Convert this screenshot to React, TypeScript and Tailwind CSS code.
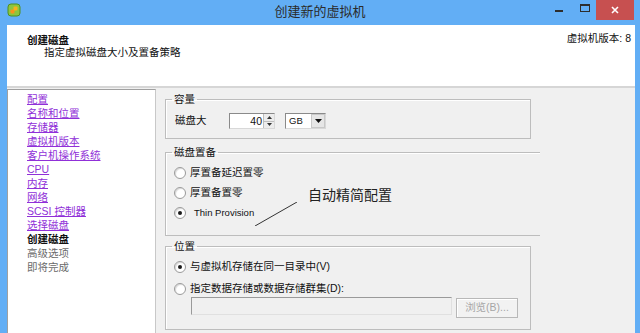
const font = { fontFamily: '"Liberation Sans", "Noto Sans CJK SC", sans-serif' };

const navItems: { label: string; kind: "link" | "current" | "todo" }[] = [
  { label: "配置", kind: "link" },
  { label: "名称和位置", kind: "link" },
  { label: "存储器", kind: "link" },
  { label: "虚拟机版本", kind: "link" },
  { label: "客户机操作系统", kind: "link" },
  { label: "CPU", kind: "link" },
  { label: "内存", kind: "link" },
  { label: "网络", kind: "link" },
  { label: "SCSI 控制器", kind: "link" },
  { label: "选择磁盘", kind: "link" },
  { label: "创建磁盘", kind: "current" },
  { label: "高级选项", kind: "todo" },
  { label: "即将完成", kind: "todo" },
];

const Radio = ({ checked = false }: { checked?: boolean }) => (
  <span className="ml-[2px] flex h-[12px] w-[12px] shrink-0 items-center justify-center rounded-full border border-[#9a9a9a] bg-white shadow-[inset_1px_1px_1px_#d8d8d8]">
    {checked && <span className="h-[4px] w-[4px] rounded-full bg-[#1a1a1a]" />}
  </span>
);

const Legend = ({ children }: { children: string }) => (
  <legend className="px-[2px] text-[10.5px] leading-[14px] text-[#111]">{children}</legend>
);

const TitleIcon = () => (
  <svg width="14" height="14" viewBox="0 0 14 14">
    <rect x="1" y="1" width="12" height="12" rx="3" fill="#8cc63f" stroke="#4f8f22" strokeWidth="1" />
    <rect x="3.5" y="6.5" width="4" height="4" rx="1" fill="#f7941d" />
    <rect x="6.5" y="3.5" width="4" height="4" rx="1" fill="#f7b21d" />
  </svg>
);

export default function App() {
  return (
    <div className="flex h-[333px] w-[640px] flex-col overflow-hidden bg-[#62aef5] text-[#111]" style={font}>
      {/* title bar */}
      <div className="grid h-[25px] shrink-0 grid-cols-[1fr_auto_1fr]">
        <div className="pl-[7px] pt-[3px]">
          <TitleIcon />
        </div>
        <div className="pt-[3px] text-[13px] leading-[18px] text-[#2b2b2b]">创建新的虚拟机</div>
        <div className="flex items-start justify-end pr-[6px]">
          <div className="mt-[10px] h-[2px] w-[8px] bg-[#2d2d2d]" />
          <div className="ml-[17px] mt-[4px] h-[8px] w-[10px] border border-t-2 border-[#2d2d2d]" />
          <div className="ml-[6px] flex h-[20px] w-[38px] items-center justify-center bg-[#c75050]">
            <svg width="8" height="8" viewBox="0 0 8 8">
              <path d="M1 1L7 7M7 1L1 7" stroke="#fff" strokeWidth="1.6" />
            </svg>
          </div>
        </div>
      </div>

      <div className="flex flex-1 flex-col pl-[7px] pr-[5px]">
        {/* header */}
        <div className="flex h-[63px] shrink-0 items-start justify-between border-b-2 border-[#d6d6d6] bg-white">
          <div className="pl-[20px] pt-[9px] text-[10.5px] leading-[12px]">
            <div className="font-bold">创建磁盘</div>
            <div className="pl-[17px]">指定虚拟磁盘大小及置备策略</div>
          </div>
          <div className="pr-[4px] pt-[7px] text-[10.5px] leading-[12px]">虚拟机版本: 8</div>
        </div>

        {/* body */}
        <div className="flex flex-1 bg-[#f0f0f0] pt-px">
          <nav className="w-[149px] shrink-0 border border-b-0 border-[#a0a0a0] border-r-[#c8c8c8] bg-white pl-[19px] pt-[2px] text-[10.5px] leading-[14px]">
            {navItems.map((item) => (
              <div
                key={item.label}
                className={
                  item.kind === "link"
                    ? "text-[#9030d8] underline underline-offset-1"
                    : item.kind === "current"
                      ? "font-bold text-[#111]"
                      : "text-[#6a6a6a]"
                }
              >
                {item.label}
              </div>
            ))}
          </nav>

          <div className="flex flex-col pl-[9px]">
            {/* capacity */}
            <fieldset className="mt-[3px] w-[366px] border border-[#bdbdbd] px-[6px] pb-[9px] pt-[7px] shadow-[inset_1px_1px_0_#fff]">
              <Legend>容量</Legend>
              <div className="flex h-[16px] items-center pl-[3px] text-[10.5px]">
                <span className="w-[54px]">磁盘大</span>
                <div className="flex h-[16px] w-[46px] border border-[#8a8a8a] border-b-[#d8d8d8] border-r-[#d8d8d8] bg-white">
                  <span className="flex-1 pr-px text-right leading-[14px]">40</span>
                  <div className="flex w-[11px] flex-col border-l border-[#bdbdbd]">
                    <div className="flex flex-1 items-center justify-center border-b border-[#bdbdbd] bg-[#ececec]">
                      <svg width="5" height="3" viewBox="0 0 5 3">
                        <path d="M0 3L2.5 0L5 3Z" fill="#333" />
                      </svg>
                    </div>
                    <div className="flex flex-1 items-center justify-center bg-[#ececec]">
                      <svg width="5" height="3" viewBox="0 0 5 3">
                        <path d="M0 0L2.5 3L5 0Z" fill="#333" />
                      </svg>
                    </div>
                  </div>
                </div>
                <div className="ml-[10px] flex h-[16px] w-[41px] border border-[#8a8a8a] border-b-[#d8d8d8] border-r-[#d8d8d8] bg-white">
                  <span className="flex-1 pl-[3px] text-[9.5px] leading-[14px]">GB</span>
                  <div className="flex w-[14px] items-center justify-center border border-[#c8c8c8] bg-[#e6e6e6]">
                    <svg width="7" height="4" viewBox="0 0 7 4">
                      <path d="M0 0L3.5 4L7 0Z" fill="#111" />
                    </svg>
                  </div>
                </div>
              </div>
            </fieldset>

            {/* disk provisioning */}
            <fieldset className="relative mt-[6px] w-[375px] border border-r-0 border-[#bdbdbd] px-[6px] pb-[12px] pt-[4px] shadow-[inset_1px_1px_0_#fff]">
              <Legend>磁盘置备</Legend>
              <div className="flex h-[20px] items-center gap-[4px] text-[10.5px]">
                <Radio />
                <span>厚置备延迟置零</span>
              </div>
              <div className="flex h-[20px] items-center gap-[4px] text-[10.5px]">
                <Radio />
                <span>厚置备置零</span>
              </div>
              <div className="flex h-[20px] items-center gap-[8px] text-[9.5px]">
                <Radio checked />
                <span>Thin Provision</span>
              </div>
              <div className="absolute left-[142px] top-[27px] text-[14px] leading-[18px] text-[#222]">自动精简配置</div>
              <svg className="absolute left-[89px] top-[43px]" width="42" height="24" viewBox="0 0 42 24">
                <line x1="0" y1="24" x2="42" y2="0" stroke="#333" strokeWidth="1" />
              </svg>
            </fieldset>

            {/* location */}
            <fieldset className="mt-[3px] w-[366px] border border-[#bdbdbd] px-[6px] pb-[11px] pt-[4px] shadow-[inset_1px_1px_0_#fff]">
              <Legend>位置</Legend>
              <div className="flex h-[20px] items-center gap-[4px] text-[10.5px]">
                <Radio checked />
                <span>与虚拟机存储在同一目录中(V)</span>
              </div>
              <div className="mt-[4px] flex h-[16px] items-center gap-[4px] text-[10.5px]">
                <Radio />
                <span>指定数据存储或数据存储群集(D):</span>
              </div>
              <div className="flex items-start pl-[19px]">
                <div className="h-[18px] w-[261px] border border-[#9a9a9a] border-b-[#e0e0e0] border-r-[#e0e0e0] bg-[#f0f0f0]" />
                <button className="ml-[4px] mt-px flex h-[20px] w-[62px] items-center justify-center border border-[#b8b8b8] bg-[#f2f2f2] text-[10.5px] text-[#a6a6a6] shadow-[inset_1px_1px_0_#fff]">
                  浏览(B)...
                </button>
              </div>
            </fieldset>
          </div>
        </div>
      </div>
    </div>
  );
}
